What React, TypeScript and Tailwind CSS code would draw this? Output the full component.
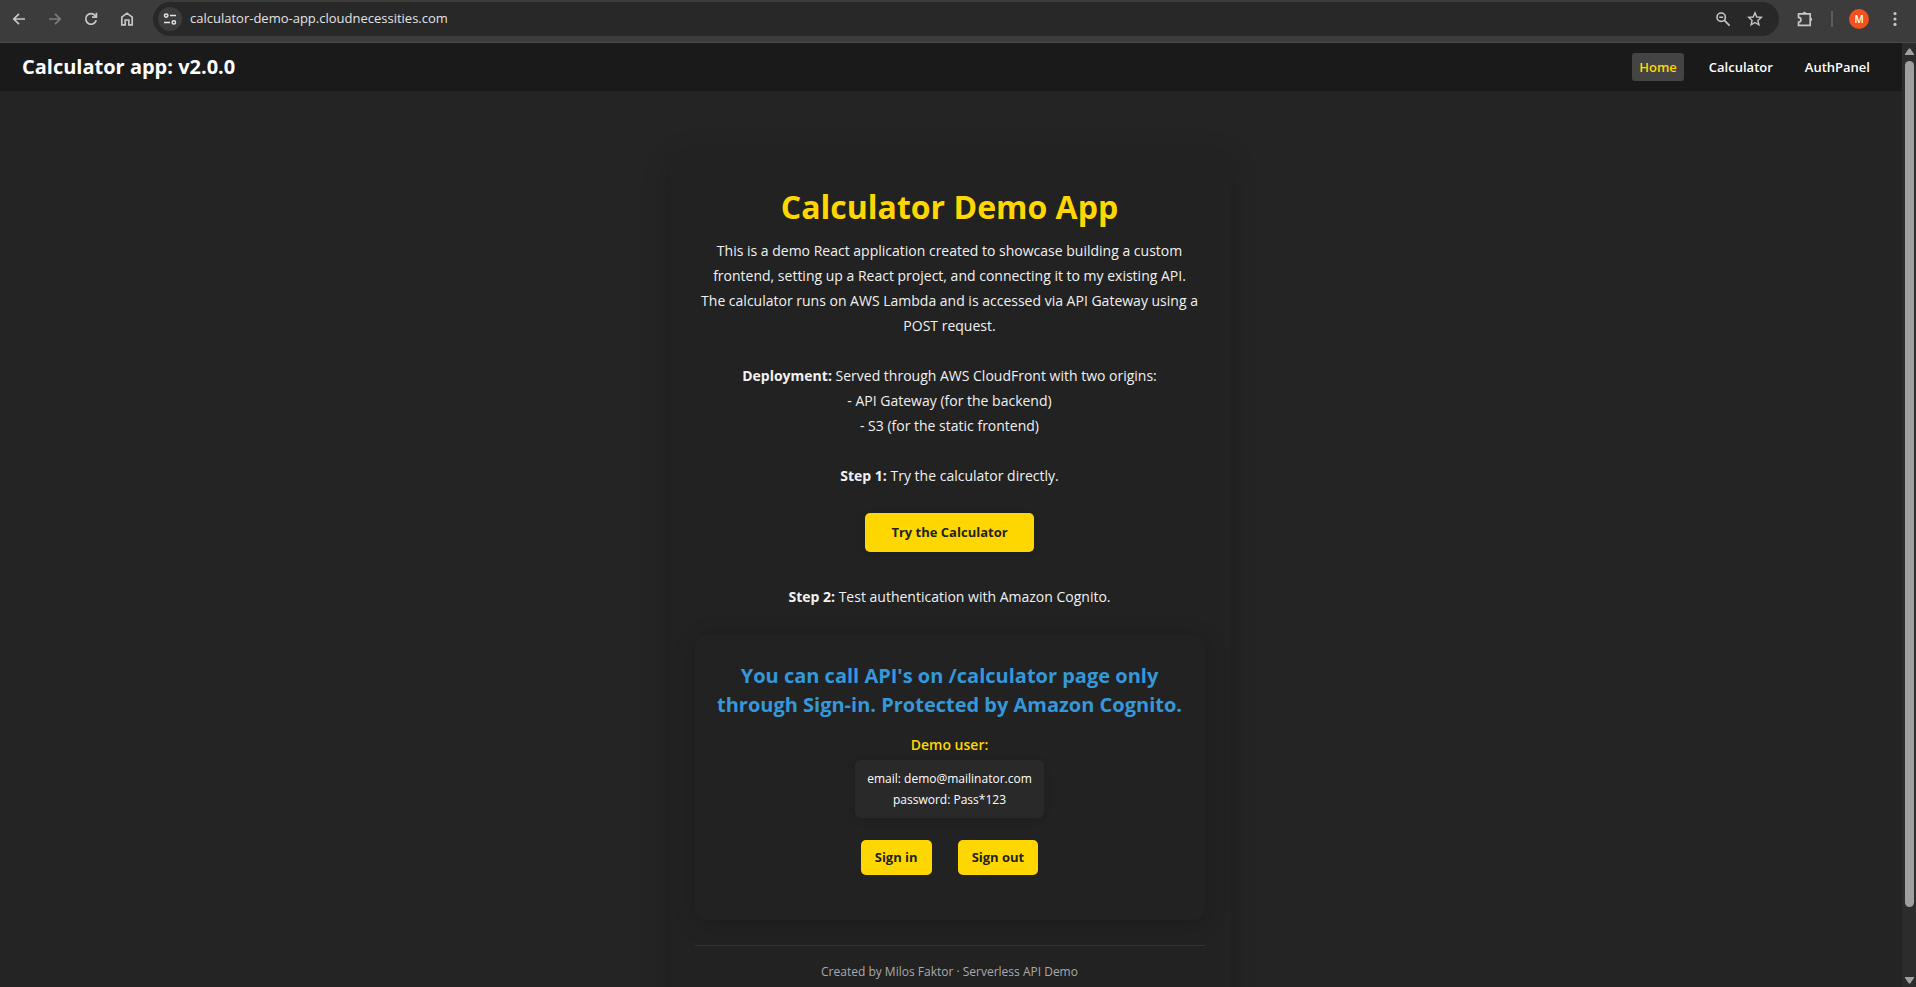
import React from "react";

const TOOL_BUTTON = "flex size-9 items-center justify-center text-[#c7c7c7]";

function BrowserBar() {
  return (
    <header className="flex h-[43px] shrink-0 items-center border-b border-[#4a4a4a] bg-[#3c3c3c] pb-1 pl-px pr-[3px]">
      <button type="button" aria-label="Back" className={TOOL_BUTTON}>
        <svg viewBox="0 0 16 16" className="size-4" fill="none" stroke="currentColor" strokeWidth="1.7">
          <path d="M14 8H3M8 2.8L2.8 8L8 13.2" />
        </svg>
      </button>
      <button type="button" aria-label="Forward" className="flex size-9 items-center justify-center text-[#7c7c7c]">
        <svg viewBox="0 0 16 16" className="size-4" fill="none" stroke="currentColor" strokeWidth="1.7">
          <path d="M2 8H13M8 2.8L13.2 8L8 13.2" />
        </svg>
      </button>
      <button type="button" aria-label="Reload" className={TOOL_BUTTON}>
        <svg viewBox="0 0 16 16" className="size-4" fill="none" stroke="currentColor" strokeWidth="1.7">
          <path d="M13.2 9.2A5.3 5.3 0 1 1 12.2 4.6L13.4 6" />
          <path d="M13.4 1.8V6.2H9" />
        </svg>
      </button>
      <button type="button" aria-label="Home page" className={TOOL_BUTTON}>
        <svg viewBox="0 0 16 16" className="size-4" fill="none" stroke="currentColor" strokeWidth="1.7">
          <path d="M2.8 13.8V6.2L8 2.2L13.2 6.2V13.8H9.8V9H6.2V13.8Z" />
        </svg>
      </button>
      <div className="ml-2 flex h-[34px] flex-1 items-center rounded-full bg-[#282828] pl-[5px] pr-2">
        <button type="button" aria-label="View site information" className="flex size-6 items-center justify-center rounded-full bg-[#3c3c3c] text-[#e3e3e3]">
          <svg viewBox="0 0 14 14" className="size-3.5" fill="none" stroke="currentColor" strokeWidth="1.5">
            <circle cx="3.2" cy="3.6" r="1.7" />
            <path d="M7 3.6H13M1 10.4H7" />
            <circle cx="10.8" cy="10.4" r="1.7" />
          </svg>
        </button>
        <input
          aria-label="Address"
          readOnly
          value="calculator-demo-app.cloudnecessities.com"
          className="ml-2 min-w-0 flex-1 bg-transparent text-[13px] text-[#e3e3e3] outline-none"
        />
        <button type="button" aria-label="Zoom" className="flex size-8 items-center justify-center text-[#c7c7c7]">
          <svg viewBox="0 0 16 16" className="size-4" fill="none" stroke="currentColor" strokeWidth="1.6">
            <circle cx="6.2" cy="6.2" r="4.2" />
            <path d="M9.4 9.4L14.6 14.6M4.2 6.2H8.2" />
          </svg>
        </button>
        <button type="button" aria-label="Bookmark this page" className="flex size-8 items-center justify-center text-[#c7c7c7]">
          <svg viewBox="0 0 16 16" className="size-4" fill="none" stroke="currentColor" strokeWidth="1.4">
            <path d="M8 1.8L9.8 6L14.3 6.4L10.9 9.4L11.9 13.8L8 11.5L4.1 13.8L5.1 9.4L1.7 6.4L6.2 6Z" />
          </svg>
        </button>
      </div>
      <div className="ml-2 flex items-center">
        <button type="button" aria-label="Extensions" className={TOOL_BUTTON}>
          <svg viewBox="0 0 18 18" className="size-[18px]" fill="none" stroke="currentColor" strokeWidth="1.7">
            <path d="M2.5 3.8H14.2V15.4H2.5V12.2A2.4 2.4 0 0 0 2.5 7.4Z" strokeLinejoin="round" />
            <path d="M6.6 3.6A1.8 1.8 0 0 1 10.2 3.6ZM14.4 7.6A1.8 1.8 0 0 1 14.4 11.2Z" fill="currentColor" stroke="none" />
          </svg>
        </button>
        <span className="mx-2 h-4 w-0.5 bg-[#5c5c5c]" />
        <button type="button" aria-label="Profile" className="mx-2 flex size-5 items-center justify-center rounded-full bg-[#f4511e] text-[10px] font-semibold text-white">
          M
        </button>
        <button type="button" aria-label="Browser menu" className={TOOL_BUTTON}>
          <svg viewBox="0 0 16 16" className="size-4" fill="currentColor">
            <circle cx="8" cy="2.6" r="1.6" />
            <circle cx="8" cy="8" r="1.6" />
            <circle cx="8" cy="13.4" r="1.6" />
          </svg>
        </button>
      </div>
    </header>
  );
}

function NavBar() {
  return (
    <nav className="flex h-12 shrink-0 items-center justify-between bg-[#1a1a1a] pl-[22px] pr-[25px]">
      <span className="text-xl font-bold text-white">Calculator app: v2.0.0</span>
      <div className="flex gap-[18px] text-[13px] font-semibold text-white">
        <a href="#home" className="rounded-[3px] bg-[#444444] px-[7px] py-1 leading-5 text-[#ffd700]">Home</a>
        <a href="#calculator" className="px-[7px] py-1 leading-5">Calculator</a>
        <a href="#auth" className="px-[7px] py-1 leading-5">AuthPanel</a>
      </div>
    </nav>
  );
}

function AuthCard() {
  return (
    <section className="mt-[25px] flex flex-col items-center rounded-xl bg-[#222222] px-[18px] pb-[45px] pt-[27px] shadow-[0_4px_22px_rgba(0,0,0,0.18)]">
      <h2 className="text-xl leading-[29px] font-bold text-[#3498db]">
        You can call API's on /calculator page only
        <br />
        through Sign-in. Protected by Amazon Cognito.
      </h2>
      <p className="mt-[13px] text-sm leading-[25px] font-semibold text-[#ffd700]">Demo user:</p>
      <div className="mt-[3px] rounded-md bg-[#292929] px-3 py-2 text-xs leading-[21px] text-white shadow-[0_2px_8px_rgba(0,0,0,0.12)]">
        email: demo@mailinator.com
        <br />
        password: Pass*123
      </div>
      <div className="mt-[22px] flex gap-[26px] text-[13px] leading-[19px] font-bold text-[#222222]">
        <button type="button" className="rounded-[5px] bg-[#ffd700] px-3.5 py-2">Sign in</button>
        <button type="button" className="rounded-[5px] bg-[#ffd700] px-3.5 py-2">Sign out</button>
      </div>
    </section>
  );
}

function HomeCard() {
  return (
    <main className="mx-auto w-full max-w-[560px] rounded-2xl bg-[#222222] px-[25px] pb-9 pt-9 text-center shadow-[0_7px_29px_rgba(0,0,0,0.18)]">
      <h1 className="text-[32px] leading-[42px] font-bold text-[#ffd700]">Calculator Demo App</h1>
      <p className="mt-[10px] text-sm leading-[25px] text-[#f1f1f1]">
        This is a demo React application created to showcase building a custom
        <br />
        frontend, setting up a React project, and connecting it to my existing API.
        <br />
        The calculator runs on AWS Lambda and is accessed via API Gateway using a
        <br />
        POST request.
        <br />
        <br />
        <b>Deployment:</b> Served through AWS CloudFront with two origins:
        <br />- API Gateway (for the backend)
        <br />- S3 (for the static frontend)
        <br />
        <br />
        <b>Step 1:</b> Try the calculator directly.
      </p>
      <a href="#calculator" className="mt-[25px] inline-block rounded-[5px] bg-[#ffd700] px-[26px] py-[9px] text-[13px] leading-[21px] font-bold text-[#222222] shadow-[0_2px_7px_rgba(0,0,0,0.15)]">
        Try the Calculator
      </a>
      <p className="mt-8 text-sm leading-[25px] text-[#f1f1f1]">
        <b>Step 2:</b> Test authentication with Amazon Cognito.
      </p>
      <AuthCard />
      <footer className="mt-[25px] border-t border-[#333333] pt-4 text-xs leading-5 text-[#aaaaaa]">
        Created by Milos Faktor · Serverless API Demo
      </footer>
    </main>
  );
}

function ScrollRail() {
  return (
    <div className="flex w-3.5 shrink-0 flex-col items-center bg-[#2c2c2c] pb-[3px] pt-[5px]">
      <svg viewBox="0 0 9 7" className="h-[7px] w-[9px] shrink-0" fill="#9f9f9f">
        <path d="M3.8 0.5H5.2L9 6V7H0V6Z" />
      </svg>
      <div className="mt-1.5 w-[9px] flex-1 rounded-full bg-[#9f9f9f]" />
      <svg viewBox="0 0 9 7" className="mt-[70px] h-[7px] w-[9px] shrink-0" fill="#9f9f9f">
        <path d="M3.8 6.5H5.2L9 1V0H0V1Z" />
      </svg>
    </div>
  );
}

export default function App() {
  return (
    <div className="flex h-screen flex-col overflow-hidden bg-[#242424] font-['Open_Sans','Noto_Sans',sans-serif]">
      <BrowserBar />
      <div className="flex min-h-0 flex-1">
        <div className="min-w-0 flex-1 overflow-hidden">
          <NavBar />
          <div className="pr-[3px] pt-[59px]">
            <HomeCard />
          </div>
        </div>
        <ScrollRail />
      </div>
    </div>
  );
}
